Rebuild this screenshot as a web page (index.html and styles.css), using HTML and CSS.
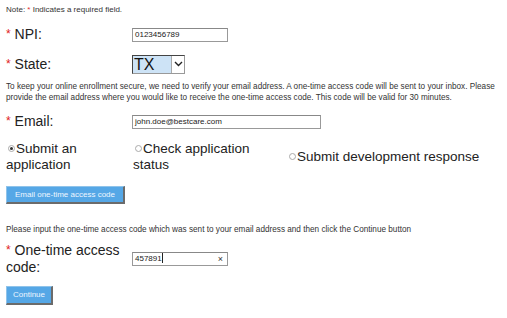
FILE: index.html
```html
<!DOCTYPE html>
<html>
<head>
<meta charset="utf-8">
<link rel="stylesheet" href="styles.css">
</head>
<body>
<div class="page">
  <p class="note">Note: <span class="req">*</span> Indicates a required field.</p>

  <div class="row row-npi">
    <div class="label"><span class="star">*</span> NPI:</div>
    <div class="field"><div class="input short">0123456789</div></div>
  </div>

  <div class="row row-state">
    <div class="label"><span class="star">*</span> State:</div>
    <div class="field">
      <div class="select"><span class="sel-val">TX</span><span class="sel-arrow"><svg width="9" height="6" viewBox="0 0 9 6"><path d="M1 1 L4.5 4.5 L8 1" fill="none" stroke="#222" stroke-width="1.4"/></svg></span></div>
    </div>
  </div>

  <p class="info">To keep your online enrollment secure, we need to verify your email address. A one-time access code will be sent to your inbox. Please provide the email address where you would like to receive the one-time access code. This code will be valid for 30 minutes.</p>

  <div class="row row-email">
    <div class="label"><span class="star">*</span> Email:</div>
    <div class="field"><div class="input long">john.doe@bestcare.com</div></div>
  </div>

  <div class="radios">
    <div class="radio r1"><span class="dot on"></span>Submit an application</div>
    <div class="radio r2"><span class="dot"></span>Check application status</div>
    <div class="radio r3"><span class="dot"></span>Submit development response</div>
  </div>

  <div class="btn-row"><span class="btn btn-email">Email one-time access code</span></div>

  <p class="info info2">Please input the one-time access code which was sent to your email address and then click the Continue button</p>

  <div class="row row-code">
    <div class="label code-label"><span class="star">*</span> <span>One-time access</span><br><span>code:</span></div>
    <div class="field"><div class="input short code">457891<span class="caret"></span><span class="clear">×</span></div></div>
  </div>

  <div class="btn-row"><span class="btn btn-cont">Continue</span></div>
</div>
</body>
</html>
```

FILE: styles.css
```css
html, body {
  margin: 0;
  padding: 0;
  background: #ffffff;
}
body {
  font-family: "Liberation Sans", Arial, sans-serif;
  color: #222222;
}
.page {
  padding: 5px 6px 0 6px;
}
.note {
  margin: 0;
  font-size: 8px;
  line-height: 10px;
  color: #333;
}
.req { color: #e03030; }
.row {
  display: flex;
  align-items: center;
}
.label {
  width: 126px;
  font-size: 14px;
  line-height: 17px;
  color: #222;
}
.star {
  color: #e02020;
  font-size: 12px;
  line-height: 12px;
  vertical-align: 1px;
}
.row-npi { margin-top: 12px; height: 15px; }
.row-state { margin-top: 13px; height: 18px; }
.input {
  box-sizing: border-box;
  height: 14px;
  border: 1px solid #999;
  border-top-color: #888;
  font-size: 8px;
  line-height: 12px;
  padding-left: 2px;
  color: #222;
  background: #fff;
  position: relative;
}
.short { width: 96px; }
.long { width: 189px; }
.select {
  box-sizing: border-box;
  width: 53px;
  height: 19px;
  border: 1px solid #444;
  border-right-color: #999;
  border-bottom-color: #999;
  background: #cde3f6;
  display: flex;
  align-items: stretch;
}
.sel-val {
  flex: 1;
  font-size: 16px;
  line-height: 17px;
  padding-left: 1px;
  color: #111;
}
.sel-arrow {
  width: 12px;
  background: #fff;
  border-left: 1px solid #aaa;
  display: flex;
  align-items: center;
  justify-content: center;
}
.info {
  margin: 9px 0 0 0;
  font-size: 8.2px;
  line-height: 10.5px;
  color: #333;
}
.row-email { margin-top: 11px; height: 15px; }
.radios {
  display: flex;
  align-items: center;
  margin-top: 12px;
  font-size: 13.5px;
  line-height: 16px;
  color: #222;
}
.radio { position: relative; }
.r1 { width: 127px; }
.r2 { width: 154px; }
.r3 { width: auto; }
.dot {
  display: inline-block;
  box-sizing: border-box;
  width: 7px;
  height: 7px;
  border: 1px solid #aaa;
  border-radius: 50%;
  margin: 0 1px 0 2px;
  vertical-align: 1px;
  background: #fff;
  position: relative;
}
.dot.on::after {
  content: "";
  position: absolute;
  left: 1px;
  top: 1px;
  width: 3px;
  height: 3px;
  border-radius: 50%;
  background: #333;
}
.btn-row { display: flex; }
.btn {
  box-sizing: border-box;
  display: inline-block;
  background: #55a7e6;
  color: #eef6ff;
  font-size: 8px;
  border: 1px solid #8fc3ea;
  border-right: 2px solid #6b6b6b;
  border-bottom: 2px solid #6b6b6b;
  text-align: center;
}
.btn-email {
  margin-top: 13px;
  width: 119px;
  height: 18px;
  line-height: 15px;
}
.info2 { margin-top: 21px; }
.row-code { margin-top: 6px; height: 34px; }
.code { font-size: 8px; }
.caret {
  display: inline-block;
  width: 1px;
  height: 10px;
  background: #222;
  vertical-align: -2px;
}
.clear {
  position: absolute;
  right: 4px;
  top: 0;
  font-size: 9px;
  line-height: 12px;
  color: #333;
}
.btn-cont {
  margin-top: 10px;
  width: 47px;
  height: 19px;
  line-height: 16px;
}
```
